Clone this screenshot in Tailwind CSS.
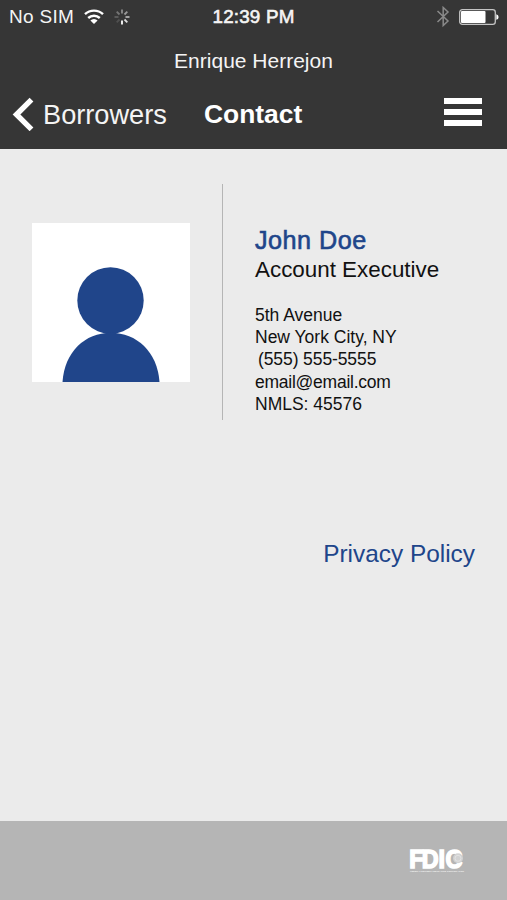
<!DOCTYPE html>
<html lang="en">
<head>
  <meta charset="UTF-8">
  <meta name="viewport" content="width=device-width, initial-scale=1.0">
  <title>Contact</title>
  <script src="https://cdn.jsdelivr.net/npm/@tailwindcss/browser@4"></script>
</head>
<body class="font-['Liberation_Sans',Arial,sans-serif] bg-[#ebebeb]">
  <div class="w-full h-[900px] flex flex-col overflow-hidden">

    <!-- Header -->
    <header class="h-[149px] shrink-0 bg-[#363636] text-[#f4f4f4] whitespace-nowrap">
      <!-- Status bar -->
      <div class="h-[33px] grid grid-cols-[1fr_auto_1fr] items-center pl-[9px] pr-2">
        <div class="flex items-center">
          <span class="text-[19px] tracking-[0.3px] w-[75px] pt-px">No SIM</span>
          <svg class="w-5 h-4" viewBox="0 0 20 16" fill="none" stroke="#fff" stroke-width="2.4">
            <path d="M1 5.2 A13 13 0 0 1 19 5.2"/>
            <path d="M4.2 9 A8.5 8.5 0 0 1 15.8 9"/>
            <path d="M10 15 L6.4 11.5 A5 5 0 0 1 13.6 11.5 Z" fill="#fff" stroke="none"/>
          </svg>
          <svg class="w-4 h-4 ml-[10px]" viewBox="-8 -8 16 16" stroke-width="1.8">
            <path d="M0 -3.5V-7.5" stroke="#8d8d8d"/>
            <path d="M2.5 -2.5L5.3 -5.3" stroke="#9a9a9a"/>
            <path d="M3.5 0H7.5" stroke="#b0b0b0"/>
            <path d="M2.5 2.5L5.3 5.3" stroke="#dcdcdc"/>
            <path d="M0 3.5V7.5" stroke="#fff"/>
            <path d="M-2.5 2.5L-5.3 5.3" stroke="#505050"/>
            <path d="M-3.5 0H-7.5" stroke="#606060"/>
            <path d="M-2.5 -2.5L-5.3 -5.3" stroke="#757575"/>
          </svg>
        </div>
        <span class="text-[18.8px] tracking-[0.2px] pt-px pr-px [-webkit-text-stroke:0.6px]">12:39 PM</span>
        <div class="flex items-center justify-end">
          <svg class="w-[14px] h-[22px] mr-[9px]" viewBox="0 0 14 22" fill="none" stroke="#8a8a8a" stroke-width="1.5">
            <path d="M1.5 5L12 15L7.2 19.5V1.5L12 6L1.5 16"/>
          </svg>
          <svg class="w-10 h-4" viewBox="0 0 40 16">
            <rect x=".7" y=".7" width="35.6" height="14.6" rx="2.6" fill="none" stroke="#c4c4c4" stroke-width="1.3"/>
            <rect x="2" y="2" width="24.5" height="12" rx="1" fill="#fff"/>
            <path d="M37.3 5.2Q39.6 5.6 39.6 8T37.3 10.8Z" fill="#fff"/>
          </svg>
        </div>
      </div>

      <div class="h-[55px] flex items-center justify-center text-[21px]">Enrique Herrejon</div>

      <!-- Navigation bar -->
      <nav class="h-[53px] flex items-center pl-3 pr-[25px]">
        <a href="#" class="w-[192px] flex items-center text-[27.2px]">
          <svg class="w-[22px] h-[34px] mr-[9px]" viewBox="0 0 22 34" fill="none" stroke="#fff" stroke-width="5.4">
            <path d="M19.5 2.7L4.5 17.5L19.5 32.3"/>
          </svg>
          <span class="pt-px">Borrowers</span>
        </a>
        <h1 class="text-[26.4px] font-bold text-white">Contact</h1>
        <button class="ml-auto flex flex-col gap-[5px] -mt-[5px]" aria-label="Menu">
          <span class="w-[38px] h-[6px] bg-white"></span>
          <span class="w-[38px] h-[6px] bg-white"></span>
          <span class="w-[38px] h-[6px] bg-white"></span>
        </button>
      </nav>
    </header>

    <!-- Contact details -->
    <main class="flex-1 pt-[35px]">
      <section class="flex h-[236px]">
        <div class="w-[223px] border-r border-[#b5b5b5] pl-8 pt-[39px]">
          <svg class="w-[158px] h-[159px] bg-white" viewBox="0 0 158 159" fill="#20458a">
            <circle cx="78.5" cy="77.5" r="33.2"/>
            <path d="M30.5 159C32.5 129 53 109.8 78.8 109.8S125.5 129 127.5 159Z"/>
          </svg>
        </div>
        <div class="pl-8 pt-[41px] text-[#111] whitespace-nowrap">
          <h2 class="text-[25.2px] leading-[30px] tracking-[0.5px] text-[#20458a] [-webkit-text-stroke:0.6px]">John Doe</h2>
          <p class="text-[22.4px] leading-[30px]">Account Executive</p>
          <div class="mt-[19px] text-[17.5px] leading-[22.2px]">
            <p>5th Avenue</p>
            <p>New York City, NY</p>
            <p class="pl-[3px] tracking-[-0.1px]">(555) 555-5555</p>
            <p class="tracking-[-0.25px]">email@email.com</p>
            <p>NMLS: 45576</p>
          </div>
        </div>
      </section>
      <div class="mt-[119px] pr-8 text-right">
        <a href="#" class="text-[24.4px] leading-[30px] text-[#20458a]">Privacy Policy</a>
      </div>
    </main>

    <!-- Footer -->
    <footer class="h-[79px] shrink-0 bg-[#b5b5b5] flex justify-end pr-[42px] pt-[20px]">
      <svg class="w-[56px] h-[36px] overflow-visible" viewBox="0 -5 56 36" fill="#fff">
        <text transform="scale(.88 1)" x="0.2 14.4 33.4 41.6" y="21.6" font-size="26.5" font-weight="700" stroke="#fff" stroke-width="1.6">FDIC</text>
        <circle cx="49" cy="12.3" r="5" fill="#d2d2d2"/>
        <circle cx="49" cy="12.3" r="3" fill="none" stroke="#e6e6e6" stroke-width=".8"/>
        <text x="1" y="26.2" font-size="2.4" textLength="54" lengthAdjust="spacingAndGlyphs">FEDERAL DEPOSIT INSURANCE CORPORATION</text>
      </svg>
    </footer>
  </div>
</body>
</html>
